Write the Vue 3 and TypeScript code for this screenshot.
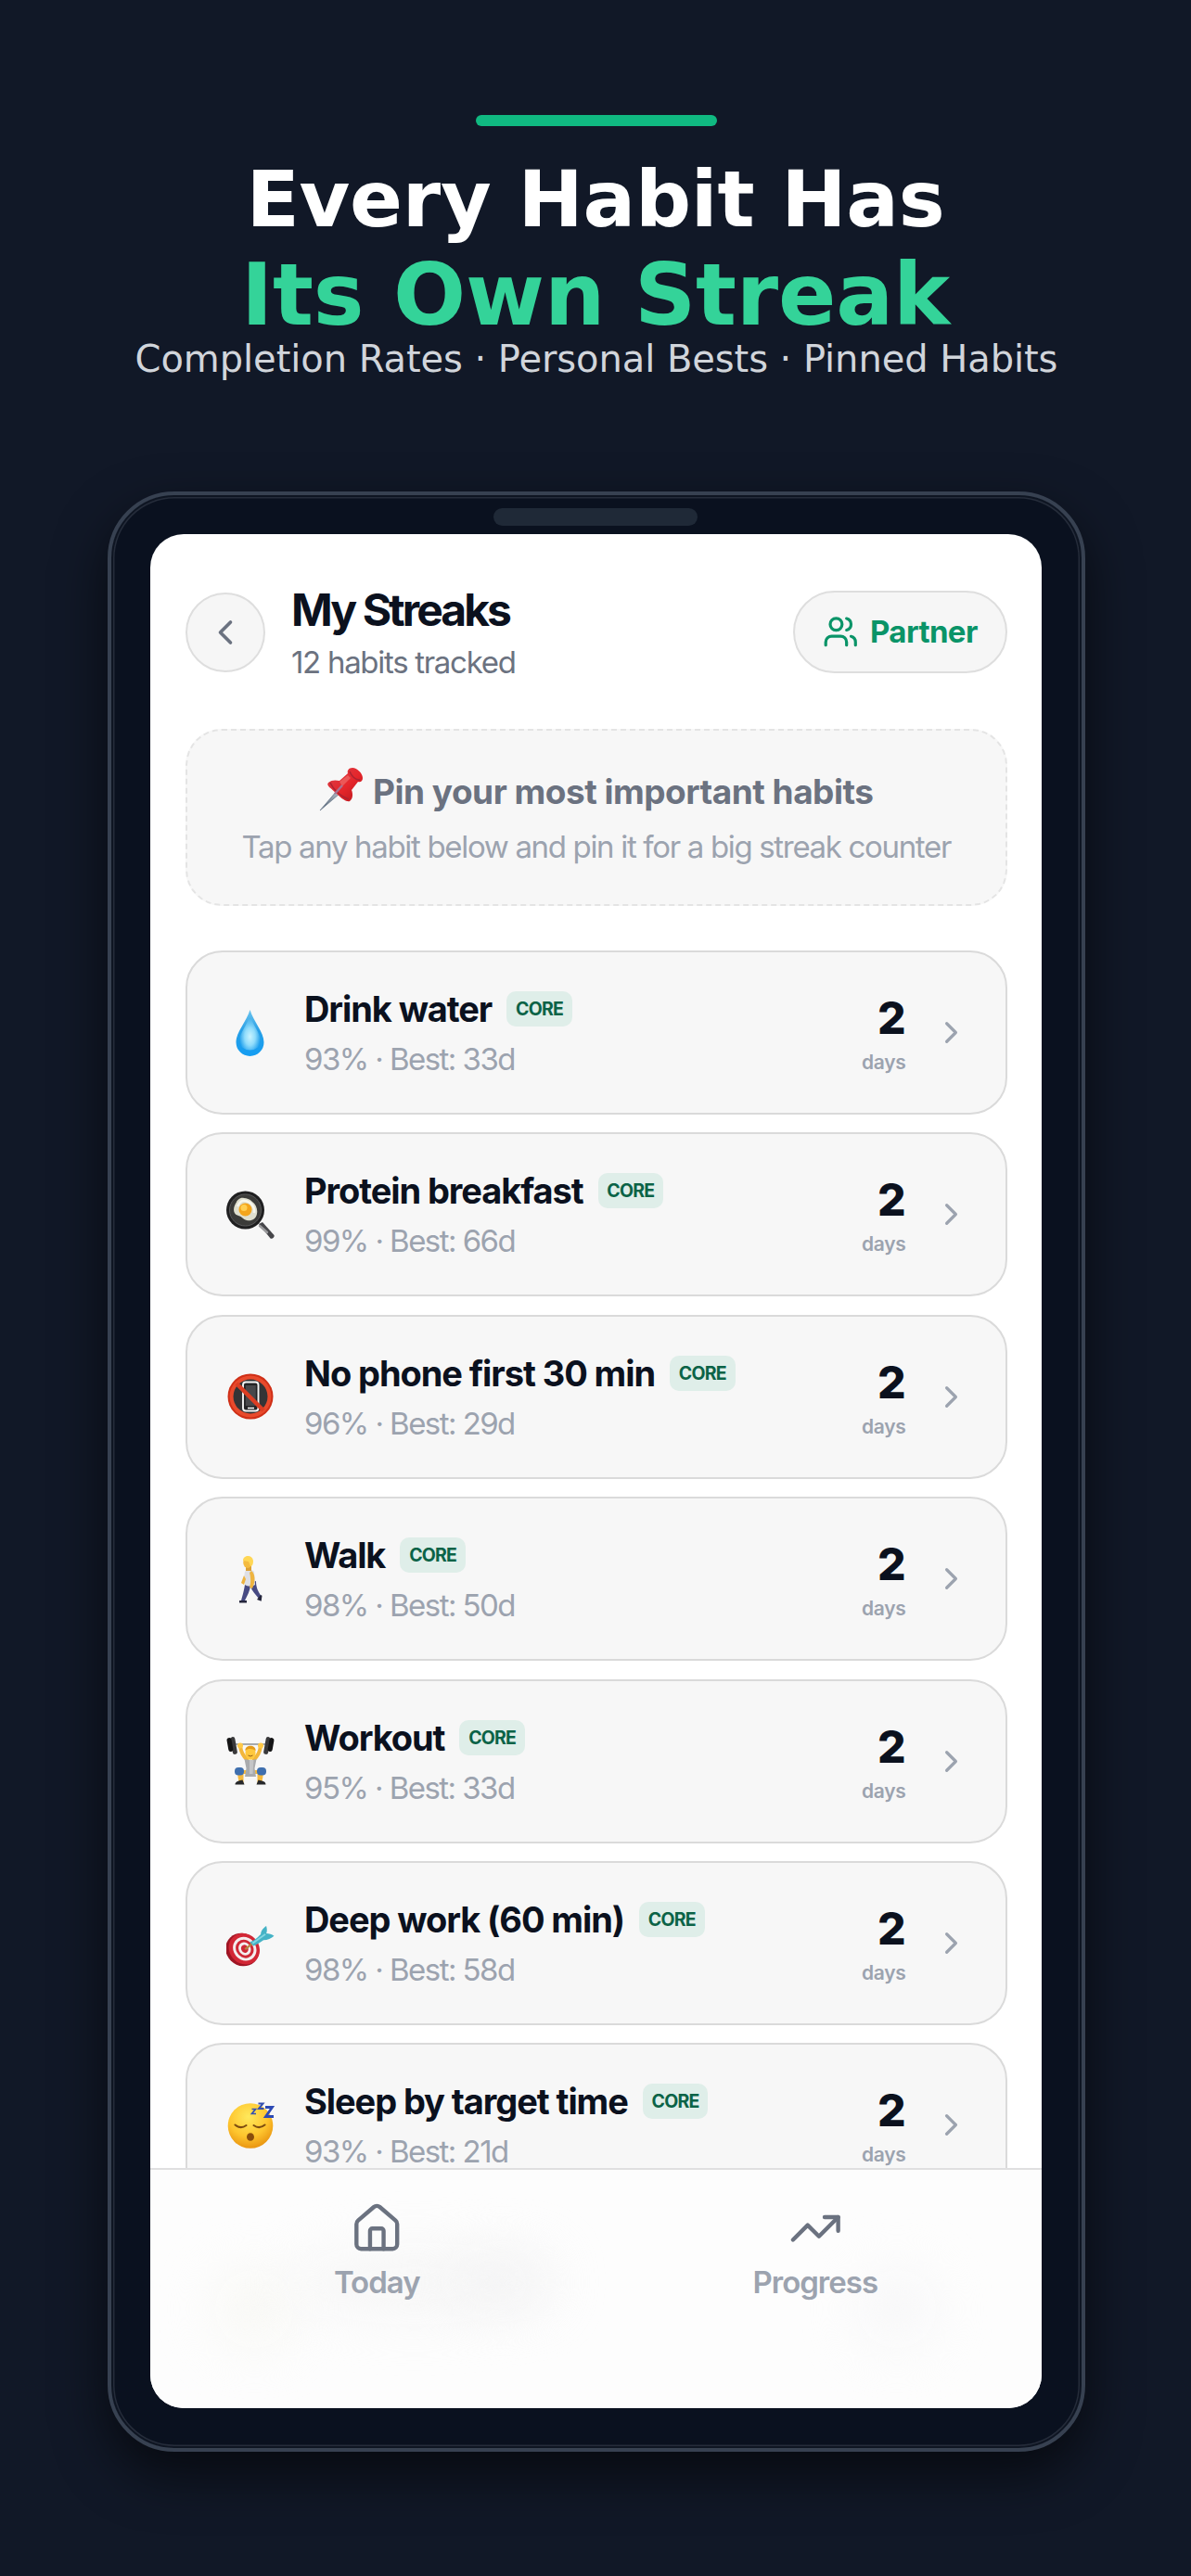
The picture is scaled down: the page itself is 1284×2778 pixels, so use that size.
<script setup lang="ts">
interface Habit {
  name: string
  icon: 'drop' | 'pan' | 'nophone' | 'walk' | 'lift' | 'target' | 'sleep'
  rate: number
  best: number
  streak: number
}

const habits: Habit[] = [
  { name: 'Drink water', icon: 'drop', rate: 93, best: 33, streak: 2 },
  { name: 'Protein breakfast', icon: 'pan', rate: 99, best: 66, streak: 2 },
  { name: 'No phone first 30 min', icon: 'nophone', rate: 96, best: 29, streak: 2 },
  { name: 'Walk', icon: 'walk', rate: 98, best: 50, streak: 2 },
  { name: 'Workout', icon: 'lift', rate: 95, best: 33, streak: 2 },
  { name: 'Deep work (60 min)', icon: 'target', rate: 98, best: 58, streak: 2 },
  { name: 'Sleep by target time', icon: 'sleep', rate: 93, best: 21, streak: 2 },
]
</script>

<template>
  <main class="stage">
    <div class="accent"></div>
    <h1 class="headline">Every Habit Has</h1>
    <h1 class="headline green">Its Own Streak</h1>
    <p class="tagline">Completion Rates · Personal Bests · Pinned Habits</p>

    <section class="phone">
      <div class="notch"></div>
      <div class="screen">
        <header class="top">
          <button class="back" aria-label="Back">
            <svg width="44" height="44" viewBox="0 0 24 24" class="line"><path d="m15 18-6-6 6-6" /></svg>
          </button>
          <div class="titles">
            <h2>My Streaks</h2>
            <p>12 habits tracked</p>
          </div>
          <button class="partner">
            <svg width="38.5" height="38.5" viewBox="0 0 24 24" class="line">
              <path d="M16 21v-2a4 4 0 0 0-4-4H6a4 4 0 0 0-4 4v2" />
              <circle cx="9" cy="7" r="4" />
              <path d="M22 21v-2a4 4 0 0 0-3-3.87" />
              <path d="M16 3.13a4 4 0 0 1 0 7.75" />
            </svg>
            <span>Partner</span>
          </button>
        </header>

        <div class="pinbox">
          <div class="pintitle">
            <svg width="48" height="48" viewBox="0 0 48 48">
              <defs>
                <linearGradient id="pinNeedle" x1="0" y1="1" x2="1" y2="0">
                  <stop offset="0" stop-color="#4c5968" /><stop offset="1" stop-color="#b9c3cf" />
                </linearGradient>
                <linearGradient id="pinBody" x1="0" y1="0" x2="1" y2="1">
                  <stop offset="0" stop-color="#d8404a" /><stop offset=".55" stop-color="#e5262b" /><stop offset="1" stop-color="#b3151c" />
                </linearGradient>
              </defs>
              <path d="M19 26 1 47 22 29Z" fill="url(#pinNeedle)" stroke="#68788a" stroke-width=".8" />
              <path d="M10 17c3-3 8-3 12-2l9-8c-1-3 1-6 5-6 5 0 11 6 11 11 0 3-2 5-5 4l-7 9c2 5 1 10-2 12-3 1-8-2-14-8S7 20 10 17Z" fill="url(#pinBody)" />
              <path d="M33 5c2 5 6 9 11 9M12 17c3 7 11 15 20 18" fill="none" stroke="#ad2230" stroke-width="1.5" />
              <path d="m22 16 9-7 3 3-9 9Z" fill="#ef6b68" opacity=".7" />
              <path d="m17 29 8-9" stroke="#a9718f" stroke-width="2.4" />
            </svg>
            <strong>Pin your most important habits</strong>
          </div>
          <p>Tap any habit below and pin it for a big streak counter</p>
        </div>

        <ul class="list">
          <li v-for="h in habits" :key="h.name" class="card">
            <svg class="emoji" width="52" height="52" viewBox="0 0 52 52">
              <g v-if="h.icon === 'drop'">
                <defs>
                  <linearGradient id="dropEdge" x1="0" y1="0" x2="0" y2="1">
                    <stop offset="0" stop-color="#6cc4ee" /><stop offset=".45" stop-color="#279fe6" /><stop offset="1" stop-color="#149df2" />
                  </linearGradient>
                  <radialGradient id="dropCore" cx=".5" cy=".62" r=".5">
                    <stop offset="0" stop-color="#c9f3ff" /><stop offset=".5" stop-color="#8fdcfc" /><stop offset="1" stop-color="#8fdcfc" stop-opacity="0" />
                  </radialGradient>
                </defs>
                <path d="M25.500 1C22 13 10.500 25 10.500 36a15 15 0 0 0 30 0C40.500 25 29 13 25.500 1Z" fill="url(#dropEdge)" />
                <path d="M25.500 6C23 17 14 26 14 35a11.500 9.500 0 0 0 23 0C37 26 28 17 25.500 6Z" fill="url(#dropCore)" />
              </g>
              <g v-else-if="h.icon === 'pan'">
                <path d="m35 36 4-2 12.500 14c.8 2-1.500 4.500-4 3.500Z" fill="#46464a" />
                <path d="m36 38 8 7" stroke="#9a9a9c" stroke-width="2.500" stroke-linecap="round" />
                <circle cx="20.500" cy="21" r="20.500" fill="#1f1f20" />
                <circle cx="20.500" cy="21" r="17" fill="#3b3b39" stroke="#59595a" stroke-width="1" />
                <path d="M9 16c2-5 5-9 10-8 3 0 6 1 9 4 4 3 6 8 5 13-1 6-6 8-11 7-4-1-5-4-9-5-5-1-6-6-4-11Z" fill="#dfdfce" />
                <path d="M12 17c2-4 4-7 8-6 7 1 11 7 10 13" fill="none" stroke="#f7f7ee" stroke-width="2.500" />
                <circle cx="20.500" cy="20.500" r="7" fill="#f3a51c" />
                <circle cx="19" cy="18.500" r="3.500" fill="#ffcf52" />
              </g>
              <g v-else-if="h.icon === 'nophone'">
                <circle cx="26" cy="26" r="24.500" fill="#cf2f17" />
                <circle cx="26" cy="26" r="22.500" fill="#e84a2c" />
                <circle cx="26" cy="26" r="18.500" fill="#343436" />
                <rect x="18" y="10.500" width="16.500" height="31" rx="3" fill="#232325" stroke="#f4f4f4" stroke-width="1.900" />
                <rect x="20.800" y="14" width="11" height="22" fill="#47474a" />
                <path d="M23 38.500h7" stroke="#f4f4f4" stroke-width="1.600" />
                <path d="m11 12 29 29" stroke="#dc3d22" stroke-width="4.500" />
              </g>
              <g v-else-if="h.icon === 'walk'">
                <path d="M20 32c-1 6-2 10-4 17h4c3-6 5-10 6-15 2 5 5 8 9 13l3-2c-4-6-6-10-6-17Z" fill="#474a83" />
                <path d="M14 49h8v2.500h-8ZM33 48l4-5 1.500.8-.8 6Z" fill="#25263c" />
                <path d="M20 18c2-3 8-3 10 0l1 14c-3 2-8 2-11 0-1-5-1-10 0-14Z" fill="#dfe0e5" />
                <path d="M27 17c4 3 5 11 1 19l-3-1c2-6 1-12 0-16ZM19 22l-3 8 3 2 2-6Z" fill="#eeb440" />
                <rect x="21" y="10" width="6" height="7" fill="#dca034" />
                <ellipse cx="23" cy="8" rx="4.800" ry="6" fill="#f4bb3f" />
                <path d="M18 6c0-6 10-7 11 0 0 4-1 6-3 6l-2-5Z" fill="#ffd755" />
              </g>
              <g v-else-if="h.icon === 'lift'">
                <path d="M8 8h36" stroke="#a7aaad" stroke-width="1.800" />
                <path d="M15 10c1 7 3 10 7.500 15M37 10c-1 7-3 10-7.500 15" fill="none" stroke="#f2b63b" stroke-width="4" stroke-linecap="round" />
                <circle cx="15" cy="9.500" r="3" fill="#ffc947" /><circle cx="37" cy="9.500" r="3" fill="#ffc947" />
                <path d="M14 36c-3 4-1 9 0 14h4.500V40h15v10H38c1-5 3-10 0-14Z" fill="#f4b83c" />
                <path d="M19.500 24c4 1.500 9 1.500 13 0l-2 10 1.500 9H20l1.500-9Z" fill="#a9abae" />
                <path d="M25 25h4.500l-1 15H25Z" fill="#c4c5c7" />
                <ellipse cx="26" cy="17.500" rx="5.500" ry="7.300" fill="#ffc83d" />
                <path d="M20.300 15c0-7 11.400-7 11.400 0-3-2-8-3-11.400 0Z" fill="#e59b19" />
                <path d="M23.500 20q2.500 2 5 0" fill="none" stroke="#93601e" stroke-width="1" />
                <rect x="9" y="33" width="10" height="8.500" rx="4" fill="#3f6fae" /><rect x="33" y="33" width="10" height="8.500" rx="4" fill="#3f6fae" />
                <path d="M9.500 51.500c0-3 3-4 8-5l2 5ZM42.500 51.500c0-3-3-4-8-5l-2 5Z" fill="#27282b" />
                <rect x="5.500" y="0" width="5" height="19" rx="2.400" transform="rotate(-10 8 9)" fill="#39393b" />
                <rect x="1.500" y="1" width="5" height="15" rx="2.400" transform="rotate(-10 4 9)" fill="#151516" />
                <rect x="41.500" y="0" width="5" height="19" rx="2.400" transform="rotate(10 44 9)" fill="#39393b" />
                <rect x="45.500" y="1" width="5" height="15" rx="2.400" transform="rotate(10 48 9)" fill="#151516" />
              </g>
              <g v-else-if="h.icon === 'target'" transform="translate(-.5 7) scale(.99 .9)">
                <ellipse cx="18" cy="29.500" rx="18" ry="20" transform="rotate(-22 18 29.500)" fill="#9f1524" />
                <ellipse cx="20" cy="28.500" rx="16.500" ry="19" transform="rotate(-22 20 28.500)" fill="#d22735" />
                <ellipse cx="20.500" cy="28.500" rx="12.500" ry="14.500" transform="rotate(-22 20.500 28.500)" fill="#f4eeee" />
                <ellipse cx="20.500" cy="28.500" rx="9.500" ry="11.300" transform="rotate(-22 20.500 28.500)" fill="#cf2936" />
                <ellipse cx="20.500" cy="28.500" rx="6.600" ry="8" transform="rotate(-22 20.500 28.500)" fill="#f4eeee" />
                <ellipse cx="20.500" cy="28.500" rx="3.800" ry="4.800" transform="rotate(-22 20.500 28.500)" fill="#cf2936" />
                <path d="m21 29 8-7" stroke="#b6863f" stroke-width="2.400" />
                <path d="M26 20c5-1 8-5 12-9 0-4 3-8 6-10 1 3 1 7 0 9 3 0 6 1 8.500 3-3 3-7 5-11.500 5-4 3-8 6-11 7Z" fill="#45b3c6" />
                <path d="m29 22 14-11" stroke="#84d7e2" stroke-width="2" />
              </g>
              <g v-else>
                <defs>
                  <radialGradient id="sleepFace" cx=".45" cy=".3" r=".72">
                    <stop offset="0" stop-color="#ffe95c" /><stop offset=".6" stop-color="#fec52e" /><stop offset="1" stop-color="#e8920f" />
                  </radialGradient>
                </defs>
                <circle cx="26" cy="26.500" r="24.300" fill="url(#sleepFace)" />
                <path d="M9.500 25.500q6 5 12 .5M29.500 26q6 4.500 12-.5" fill="none" stroke="#7d4d10" stroke-width="2" stroke-linecap="round" />
                <ellipse cx="26" cy="38.500" rx="4" ry="4.300" fill="#8a4d0c" />
                <path d="M27.500 8.500h4l-4 5h4.500" fill="none" stroke="#3550b0" stroke-width="1.700" />
                <path d="M34.500 2.500h5l-4.500 5.500h5.500" fill="none" stroke="#3550b0" stroke-width="2" />
                <path d="M42 6.500h7.500l-7 10h8.500" fill="none" stroke="#2c49b4" stroke-width="2.800" />
              </g>
            </svg>
            <div class="info">
              <div class="nameline">
                <span class="name">{{ h.name }}</span>
                <span class="badge">CORE</span>
              </div>
              <span class="stats">{{ h.rate }}% · Best: {{ h.best }}d</span>
            </div>
            <div class="count">
              <span class="num">{{ h.streak }}</span>
              <span class="unit">days</span>
            </div>
            <svg class="line chev" width="39" height="39" viewBox="0 0 24 24"><path d="m9 18 6-6-6-6" /></svg>
          </li>
        </ul>

        <nav class="tabs">
          <i class="haze warm"></i><i class="haze name-haze"></i><i class="haze dark-haze"></i><i class="haze count-haze"></i>
          <a class="tab">
            <svg class="line" width="58.500" height="58.500" viewBox="0 0 24 24">
              <path d="M15 21v-8a1 1 0 0 0-1-1h-4a1 1 0 0 0-1 1v8" />
              <path d="M3 10a2 2 0 0 1 .709-1.528l7-5.999a2 2 0 0 1 2.582 0l7 5.999A2 2 0 0 1 21 10v9a2 2 0 0 1-2 2H5a2 2 0 0 1-2-2z" />
            </svg>
            <span>Today</span>
          </a>
          <a class="tab">
            <svg class="line" width="58.500" height="58.500" viewBox="0 0 24 24">
              <path d="m22 7-8.500 8.500-5-5L2 17" />
              <path d="M16 7h6v6" />
            </svg>
            <span>Progress</span>
          </a>
        </nav>
      </div>
    </section>
  </main>
</template>

<style>
html,
body {
  margin: 0;
  background: #111827;
}
</style>

<style scoped>
* {
  box-sizing: border-box;
}
h1,
h2,
p,
ul {
  margin: 0;
  padding: 0;
}
.stage {
  width: 1284px;
  height: 2778px;
  padding: 124px 0 0 2px;
  display: flex;
  flex-direction: column;
  align-items: center;
  overflow: hidden;
  background: #111827;
}
.accent {
  width: 260px;
  height: 12px;
  border-radius: 6px;
  background: #10b981;
  margin-bottom: 29px;
}
.headline {
  margin-right: 2px;
  font: 700 84px/100px 'DejaVu Sans', sans-serif;
  letter-spacing: -0.250px;
  color: #fff;
  white-space: nowrap;
}
.headline.green {
  margin-top: 7px;
  font-size: 92px;
  line-height: 94px;
  letter-spacing: -0.200px;
  color: #34d399;
}
.tagline {
  font: 400 40px/42px 'DejaVu Sans', sans-serif;
  letter-spacing: -0.070px;
  color: #d1d5db;
  white-space: nowrap;
}
.phone {
  position: relative;
  flex: none;
  width: 1054px;
  height: 2114px;
  margin: 122px 0 0;
  padding: 42px 0 0 42px;
  border: 4px solid #374151;
  border-radius: 72px;
  background: #0a111f;
  box-shadow: inset 0 0 0 2px #0e1522, inset 0 0 0 3.500px #252c3a, 0 24px 56px rgba(0, 0, 0, 0.6);
}
.notch {
  position: absolute;
  top: 14px;
  left: 412px;
  width: 220px;
  height: 19px;
  border-radius: 10px;
  background: #1f2937;
}
.screen {
  position: relative;
  width: 961px;
  height: 2021px;
  padding: 52px 37.500px 0 38px;
  border-radius: 36px;
  overflow: hidden;
  background: #fff;
  font-family: Inter, sans-serif;
}
.line {
  display: block;
  fill: none;
  stroke: currentColor;
  stroke-width: 2;
  stroke-linecap: round;
  stroke-linejoin: round;
}
button {
  font: inherit;
  padding: 0;
}
.top {
  display: flex;
  align-items: center;
  height: 107px;
}
.back {
  display: flex;
  align-items: center;
  justify-content: center;
  width: 86px;
  height: 86px;
  border: 2px solid #dedede;
  border-radius: 50%;
  background: #f6f6f6;
  color: #6b7280;
}
.titles {
  flex: 1;
  height: 107px;
  padding: 1px 0 0 28px;
}
.titles h2 {
  font-size: 48px;
  line-height: 58px;
  font-weight: 700;
  letter-spacing: -2.950px;
  color: #0b111e;
}
.titles p {
  margin-top: 5px;
  font-size: 33px;
  line-height: 44px;
  letter-spacing: -1.300px;
  color: #6b7280;
}
.partner {
  display: flex;
  align-items: center;
  gap: 13px;
  width: 231px;
  height: 89px;
  padding-left: 30px;
  border: 2px solid #dedede;
  border-radius: 45px;
  background: #f6f6f6;
  color: #0a9468;
  font-size: 33px;
  font-weight: 700;
  letter-spacing: -0.600px;
}
.partner span {
  margin-top: -2px;
}
.pinbox {
  height: 191px;
  margin-top: 51px;
  padding-top: 41px;
  border: 2px dashed #e4e4e4;
  border-radius: 39px;
  background: #f7f7f7;
  text-align: center;
}
.pintitle {
  display: flex;
  align-items: center;
  justify-content: center;
  gap: 10px;
  height: 48px;
  font-size: 37px;
  letter-spacing: -0.500px;
  color: #6b7280;
}
.pintitle svg {
  margin-top: -4px;
}
.pintitle strong {
  font-weight: 700;
}
.pinbox p {
  margin-top: 16px;
  font-size: 33px;
  line-height: 40px;
  letter-spacing: -1.330px;
  color: #9ca3af;
}
.list {
  display: flex;
  flex-direction: column;
  gap: 19.400px;
  margin-top: 48px;
  list-style: none;
}
.card {
  flex: none;
  display: flex;
  align-items: center;
  height: 177px;
  padding: 0 39px 0 42px;
  border: 2px solid #dadada;
  border-radius: 40px;
  background: #f7f7f7;
}
.emoji {
  display: block;
  flex: none;
}
.info {
  flex: 1;
  height: 101px;
  padding-left: 32px;
}
.nameline {
  display: flex;
  align-items: center;
  gap: 16px;
  height: 50px;
}
.name {
  font-size: 38px;
  font-weight: 700;
  letter-spacing: -1.080px;
  color: #0b111e;
}
.badge {
  width: 70.500px;
  height: 38px;
  border-radius: 10px;
  background: #dfeee9;
  text-align: center;
  font-size: 19.500px;
  line-height: 38px;
  font-weight: 700;
  letter-spacing: -0.800px;
  color: #0b6347;
}
.stats {
  display: block;
  margin-top: 7px;
  font-size: 33px;
  line-height: 44px;
  letter-spacing: -1.550px;
  color: #9ca3af;
}
.count {
  display: flex;
  flex-direction: column;
  align-items: flex-end;
  height: 83px;
}
.num {
  font-size: 48px;
  line-height: 52px;
  font-weight: 800;
  color: #0b111e;
}
.unit {
  margin-top: 8px;
  font-size: 21px;
  line-height: 28px;
  font-weight: 600;
  letter-spacing: -0.300px;
  color: #9ca3af;
}
.chev {
  margin-left: 29px;
  color: #9ca3af;
}
.tabs {
  position: absolute;
  left: 0;
  right: 0;
  bottom: 0;
  height: 259px;
  padding: 34px 8px 0;
  display: grid;
  grid-template-columns: 1fr 1fr;
  border-top: 2px solid #dfdfe0;
  background: #fdfdfd;
  overflow: hidden;
}
.tab {
  position: relative;
  display: flex;
  flex-direction: column;
  align-items: center;
  gap: 8px;
  color: #6b7280;
  font-size: 33px;
  line-height: 40px;
  font-weight: 600;
  letter-spacing: -1px;
}
.tab .line {
  stroke-width: 1.800;
}
.tab span {
  color: #9ca3af;
}
/* Content scrolled beneath the translucent tab bar */
.haze {
  position: absolute;
  border-radius: 50%;
  filter: blur(28px);
}
.warm {
  left: 72px;
  top: 110px;
  width: 80px;
  height: 80px;
  background: #f8f8f4;
}
.name-haze {
  left: 150px;
  top: 90px;
  width: 270px;
  height: 65px;
  background: #f6f6f6;
}
.dark-haze {
  left: 330px;
  top: 95px;
  width: 100px;
  height: 50px;
  background: #f3f3f4;
}
.count-haze {
  left: 765px;
  top: 110px;
  width: 80px;
  height: 80px;
  background: #f7f7f8;
}
</style>
